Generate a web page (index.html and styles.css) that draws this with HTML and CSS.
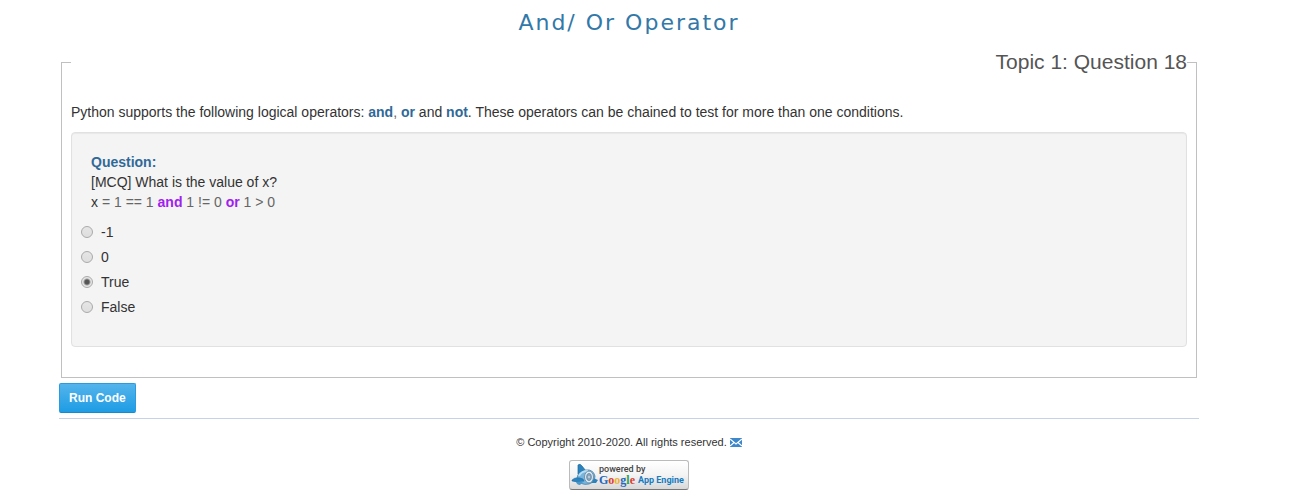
FILE: index.html
```html
<!DOCTYPE html>
<html lang="en">
<head>
<meta charset="utf-8">
<title>And/ Or Operator</title>
<link rel="stylesheet" href="styles.css">
</head>
<body>
<div class="container">
  <h1 class="title">And/ Or Operator</h1>
  <form class="quiz">
    <fieldset class="topic">
      <legend class="topic-name">Topic 1: Question 18</legend>
      <p class="intro">Python supports the following logical operators: <b>and</b><span class="op">,</span> <b>or</b> and <b>not</b>. These operators can be chained to test for more than one conditions.</p>
      <div class="well">
        <div class="question">
          <b>Question:</b><br>
          [MCQ] What is the value of x?<br>
          <span class="code">x <span class="op">= 1 == 1</span> <span class="keyword">and</span> <span class="op">1 != 0</span> <span class="keyword">or</span> <span class="op">1 &gt; 0</span></span>
        </div>
        <label class="choice"><input type="radio" name="answer" value="-1">-1</label>
        <label class="choice"><input type="radio" name="answer" value="0">0</label>
        <label class="choice"><input type="radio" name="answer" value="True" checked>True</label>
        <label class="choice"><input type="radio" name="answer" value="False">False</label>
      </div>
    </fieldset>
    <button class="run" type="button">Run Code</button>
  </form>
  <footer class="footer">
    <p class="copyright">© Copyright 2010-2020. All rights reserved.
      <a class="mail" href="#" aria-label="Email"><svg width="12" height="9" viewBox="0 0 12 9"><path d="M0 0H12V9H0Z" fill="#3d87cb"/><path d="M0 1L6 6L12 1M0 8L4 4.500M12 8L8 4.500" fill="none" stroke="#fff" stroke-width="1.200"/></svg></a>
    </p>
    <a class="badge" href="#" aria-label="Powered by Google App Engine">
      <svg class="engine" width="28" height="24" viewBox="0 0 28 24">
        <path d="M7 11L7 2Q9 0 11 3L15 8Z" fill="#2b83bd" stroke="#1b679d" stroke-width=".7"/>
        <path d="M6 15Q7 8 15 7Q22 6 24 13Q24 19 18 21Q9 23 6 15Z" fill="#78b4dc" stroke="#3079aa" stroke-width=".7"/>
        <path d="M8 13Q10 8 17 8" fill="none" stroke="#b8dcf0" stroke-width="2"/>
        <path d="M1 17Q5 13 12 16L13 18Q7 20 1 18Z" fill="#2b83bd" stroke="#1b679d" stroke-width=".5"/>
        <path d="M5 19L13 18L9 22Q6 22 5 19Z" fill="#4a97cb"/>
        <path d="M22 15L27 17L25 20L20 20Z" fill="#2b83bd"/>
        <ellipse cx="18" cy="14" rx="4.500" ry="6" fill="#dceaf3" stroke="#7193aa"/>
        <ellipse cx="18" cy="14" rx="2.400" ry="3.600" fill="#8aa6ba" stroke="#547e9c" stroke-width=".7"/>
        <circle cx="18" cy="14" r="1" fill="#c4d6e2"/>
      </svg>
      <span class="badge-text">
        <span class="powered">powered by</span>
        <span class="brand"><span class="google"><i class="blue">G</i><i class="red">o</i><i class="yellow">o</i><i class="blue">g</i><i class="green">l</i><i class="red">e</i></span><span class="product">App Engine</span></span>
      </span>
    </a>
  </footer>
</div>
</body>
</html>
```
FILE: styles.css
```css
* { box-sizing: border-box; }
body {
  margin: 0;
  padding-right: 50px;
  background: #fff;
  color: #333;
  font: 14px/20px "Liberation Sans", Arial, sans-serif;
}
.container { max-width: 1140px; margin: 0 auto; }
.title {
  margin: 0;
  padding-top: 8px;
  color: #3278a8;
  font: 22px/30px "DejaVu Sans", Verdana, sans-serif;
  letter-spacing: 2px;
  text-align: center;
}
.quiz { padding: 9px 0 5px; border-bottom: 1px solid #c5d3e6; }
.topic {
  min-width: 0;
  margin: 0 2px 5px;
  padding: 0 9px 30px;
  border: 1px solid #c0c0c0;
}
.topic-name {
  width: 100%;
  margin-bottom: 25px;
  padding: 0;
  color: #555;
  font-size: 21px;
  line-height: 30px;
  text-align: right;
}
.intro { margin: 0 0 10px; }
b { color: #306998; }
.well {
  padding: 19px 9px 29px;
  background: #f4f4f4;
  border: 1px solid #e1e1e1;
  border-radius: 4px;
  box-shadow: inset 0 1px 1px rgba(0, 0, 0, .05);
}
.question { padding: 0 10px 10px; }
.op { color: #666; }
.keyword { color: #a020f0; font-weight: bold; }
.choice { display: flex; align-items: center; gap: 8px; }
.choice + .choice { margin-top: 5px; }
.choice input {
  appearance: none;
  width: 12px;
  height: 12px;
  margin: 0;
  border: 1px solid #aaa;
  border-radius: 50%;
  background: linear-gradient(#e5e5e5, #dedede);
}
.choice input:checked {
  background: radial-gradient(circle, #555 0 2px, #e5e5e5 4px);
}
.run {
  display: block;
  height: 30px;
  padding: 0 9px;
  border: 1px solid #2a9be0;
  border-bottom-color: #178acc;
  border-radius: 2px;
  background: linear-gradient(#54b4eb, #1d9ce5);
  color: #fff;
  font: bold 12px/18px "Liberation Sans", Arial, sans-serif;
}
.footer {
  display: flex;
  flex-direction: column;
  align-items: center;
  padding-top: 13px;
  font-size: 11px;
}
.copyright { margin: 0 0 8px; }
.mail svg { vertical-align: -1px; }
.badge {
  display: flex;
  align-items: center;
  width: 120px;
  height: 30px;
  padding-left: 1px;
  border: 1px solid #bbb;
  border-bottom-color: #777;
  border-radius: 3px;
  background: linear-gradient(#fff, #f4f4f4 50%, #d8d8d8);
  text-decoration: none;
}
.badge-text { display: flex; flex-direction: column; color: #444; white-space: nowrap; }
.powered { font: 500 9px/10px Roboto, sans-serif; }
.brand { display: flex; align-items: center; gap: 3px; line-height: 12px; }
.google { font: bold 12px/12px "Liberation Serif", serif; }
.google i { font-style: normal; }
.product { color: #167bc0; font: bold 9px/12px Roboto, sans-serif; }
.blue { color: #2467bd; }
.red { color: #dc3d32; }
.yellow { color: #efb32a; }
.green { color: #32a153; }
```
